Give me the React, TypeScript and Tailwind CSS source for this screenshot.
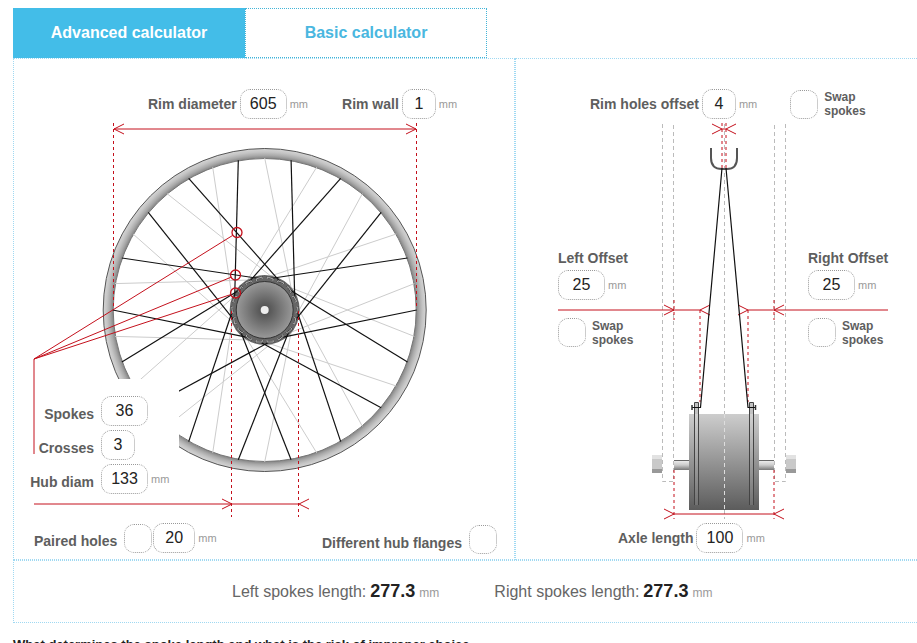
import type { ReactNode } from 'react';

interface FieldProps {
  id: string;
  label: string;
  value: string;
  size?: 'sm' | 'md' | 'lg';
}

const fieldWidths: Record<string, string> = {
  sm: 'w-[34px]',
  md: 'w-[42px]',
  lg: 'w-[47px]',
};

function NumberInput({ id, value, size = 'lg', name }: { id: string; value: string; size?: string; name?: string }) {
  return (
    <input
      id={id}
      type="text"
      inputMode="numeric"
      aria-label={name}
      defaultValue={value}
      className={`${fieldWidths[size]} h-[30px] shrink-0 rounded-[10px] border border-dotted border-[#999] bg-white text-center text-base text-[#222] outline-none`}
    />
  );
}

function CheckBox({ id }: { id: string }) {
  return (
    <input
      id={id}
      type="checkbox"
      className="h-[29px] w-7 shrink-0 appearance-none rounded-[10px] border border-dotted border-[#999] bg-white checked:bg-[#43bde8]"
    />
  );
}

function Unit() {
  return <span className="text-[11px] leading-4 text-[#999]">mm</span>;
}

/* Label, box and unit on one line */
function InlineField({ id, label, value, size }: FieldProps) {
  return (
    <div className="flex items-center gap-[3px]">
      <label htmlFor={id} className="text-sm font-bold whitespace-nowrap">
        {label}
      </label>
      <NumberInput id={id} value={value} size={size} />
      <Unit />
    </div>
  );
}

function SwapSpokes({ id }: { id: string }) {
  return (
    <div className="flex items-center gap-1.5">
      <CheckBox id={id} />
      <label htmlFor={id} className="w-12 text-xs leading-[14px] font-bold">
        Swap spokes
      </label>
    </div>
  );
}

/* Label column on the left, control on the right */
function SideField({ id, label, value, size, unit }: FieldProps & { unit?: boolean }) {
  return (
    <div className="flex items-center gap-[7px]">
      <label htmlFor={id} className="w-20 pt-1.5 text-right text-sm font-bold">
        {label}
      </label>
      <div className="flex items-center gap-[3px]">
        <NumberInput id={id} value={value} size={size} />
        {unit && <Unit />}
      </div>
    </div>
  );
}

function OffsetField({ id, label, value }: FieldProps) {
  return (
    <div>
      <label htmlFor={id} className="block text-sm leading-5 font-bold">
        {label}
      </label>
      <div className="mt-0.5 flex items-center gap-[3px]">
        <NumberInput id={id} value={value} />
        <Unit />
      </div>
      <div className="mt-[18px]">
        <SwapSpokes id={`${id}-swap`} />
      </div>
    </div>
  );
}

const polar = (r: number, deg: number) => {
  const a = (deg * Math.PI) / 180;
  return { x: r * Math.cos(a), y: -r * Math.sin(a) };
};

/* 18 spokes of one side, laced three-cross */
function Spokes({ start, color, width }: { start: number; color: string; width: number }) {
  return (
    <g stroke={color} strokeWidth={width}>
      {Array.from({ length: 18 }, (_, i) => {
        const deg = start + i * 20;
        const rim = polar(152, deg);
        const hub = polar(32, deg + (i % 2 ? 60 : -60));
        return <line key={i} x1={rim.x} y1={rim.y} x2={hub.x} y2={hub.y} />;
      })}
    </g>
  );
}

function SpokeHeads() {
  return (
    <g fill="none">
      {Array.from({ length: 18 }, (_, i) => {
        const d = i % 2 ? 'M30 -3 L32 -3 L33 3 L31 3' : 'M30 3 L32 3 L33 -3 L31 -3';
        return (
          <g key={i} transform={`rotate(${-i * 20})`}>
            <path d={d} stroke="#444" strokeWidth="1.8" />
            <path d={d} stroke="#bbb" strokeWidth="0.8" />
          </g>
        );
      })}
    </g>
  );
}

function WheelDrawing() {
  return (
    <svg viewBox="14 59 500 500" className="col-start-1 row-start-1 h-[500px] w-[500px]" aria-hidden="true">
      <defs>
        <radialGradient id="rim" gradientUnits="userSpaceOnUse" cx="0" cy="0" r="162">
          <stop offset="0.935" stopColor="#858585" />
          <stop offset="0.955" stopColor="#aaa" />
          <stop offset="0.975" stopColor="#c4c4c4" />
          <stop offset="1" stopColor="#d8d8d8" />
        </radialGradient>
        <radialGradient id="disc">
          <stop offset="0" stopColor="#4a4a4a" />
          <stop offset="1" stopColor="#999" />
        </radialGradient>
      </defs>

      <g transform="translate(264.7 310)">
        <circle r="156.5" fill="none" stroke="url(#rim)" strokeWidth="10" />
        <circle r="161.5" fill="none" stroke="#555" />
        <circle r="151.5" fill="none" stroke="#777" />
        <Spokes start={10} color="#ccc" width={1} />
        <circle r="35" fill="#666" />
        <Spokes start={0} color="#111" width={1.2} />
        <SpokeHeads />
        <circle r="28.5" fill="url(#disc)" stroke="#333" />
        <circle r="4" fill="#eee" />
      </g>

      {/* Clear area behind the fields */}
      <rect x="90" y="379" width="89" height="118" fill="#fff" />

      <g fill="none" stroke="#c4101c">
        <path d="M113.5 123V309M416.5 123V309M231.5 311V517M298.5 311V517" strokeDasharray="3 3" />
        <path d="M114 129H416M34 454V359M34 504H299" />
        <path d="M124 124L114 129L124 134M406 124L416 129L406 134" />
        <path d="M222 499L232 504L222 509M309 499L299 504L309 509" />
        <path d="M34 359L232.5 235.5M34 359L231.5 277M34 359L231 294.5" />
        <circle cx="237" cy="232.5" r="5" strokeWidth="1.3" />
        <circle cx="235.5" cy="275" r="5" strokeWidth="1.3" />
        <circle cx="235.5" cy="293" r="5" strokeWidth="1.3" />
      </g>
    </svg>
  );
}

function HubDrawing() {
  return (
    <svg viewBox="516 59 400 500" className="col-start-1 row-start-1 h-[500px] w-[400px]" aria-hidden="true">
      <defs>
        <linearGradient id="body" x1="0" y1="0" x2="0" y2="1">
          <stop offset="0" stopColor="#cdcdcd" />
          <stop offset="1" stopColor="#5c5c5c" />
        </linearGradient>
        <linearGradient id="axle" x1="0" y1="0" x2="0" y2="1">
          <stop offset="0" stopColor="#f2f2f2" />
          <stop offset="0.5" stopColor="#ccc" />
          <stop offset="1" stopColor="#777" />
        </linearGradient>
      </defs>

      {/* Fork */}
      <path
        d="M662.5 124V481.5H673.5V124M785.5 124V481.5H774.5V124"
        fill="none"
        stroke="#bbb"
        strokeDasharray="4 3"
      />

      {/* Axle and nuts */}
      <path d="M674 460H689V470H674ZM759 460H774V470H759Z" fill="url(#axle)" />
      <path d="M674 460.5H689M759 460.5H774" stroke="#666" />
      <path d="M652 455H662V459H652ZM786 455H796V459H786Z" fill="#e2e2e2" />
      <path d="M652 459H662V469H652ZM786 459H796V469H786Z" fill="#c9c9c9" />
      <path d="M652 469H662V473H652ZM786 469H796V473H786Z" fill="#999" />

      {/* Body with flanges */}
      <rect x="689" y="414" width="70" height="96" fill="url(#body)" />
      <path d="M695 403H698V414H695ZM750 403H753V414H750Z" fill="#bbb" />
      <path
        d="M694.5 505V402.5H698.5V505M749.5 505V402.5H753.5V505"
        fill="#fff"
        fillOpacity="0.1"
        stroke="#444"
      />

      <path d="M724.5 124V414M724.5 510V519" stroke="#bbb" strokeDasharray="4 3" />
      <path d="M724.5 414V510" stroke="#ddd" strokeDasharray="4 3" />

      <g fill="none" stroke="#c4101c">
        <g strokeDasharray="3 3">
          <path d="M722 123V168M726 123V168" />
          <path d="M674 300V320M774 300V320M700 310V402M748 310V402" />
          <path d="M674 470V519M774 470V519" />
        </g>
        <path d="M712 124L722 129L712 134M736 124L726 129L736 134M722 129H726" />
        <path d="M558 310H700M748 310H888" />
        <path d="M664 305L674 310L664 315M710 305L700 310L710 315" />
        <path d="M738 305L748 310L738 315M784 305L774 310L784 315" />
        <path d="M674 514H774M664 509L674 514L664 519M784 509L774 514L784 519" />
      </g>

      {/* Rim section and spokes */}
      <path d="M711 148V158Q711 169 722 169H727Q737 169 737 158V148" fill="none" stroke="#555" strokeWidth="2" />
      <path d="M722 168L700.5 407.5H692M726 168L748 407.5H756" fill="none" stroke="#111" strokeWidth="1.2" />
      <path d="M692 405V410M755.5 405V410" stroke="#333" strokeWidth="1.5" />
    </svg>
  );
}

function Tab({ active, children }: { active?: boolean; children: ReactNode }) {
  const look = active
    ? 'w-[232px] border-[#43bde8] bg-[#43bde8] text-white'
    : 'w-[242px] border-dotted border-[#43b5d8] bg-white text-[#4ab7e0]';
  return (
    <button type="button" role="tab" aria-selected={!!active} className={`h-[50px] border text-base font-bold ${look}`}>
      {children}
    </button>
  );
}

function Result({ label, value }: { label: string; value: string }) {
  return (
    <p className="flex items-baseline gap-1 text-base text-[#666]">
      {label}
      <strong className="text-lg text-[#222]">{value}</strong>
      <span className="text-xs text-[#999]">mm</span>
    </p>
  );
}

export default function App() {
  return (
    <main className="overflow-hidden bg-white pt-2 pl-[13px] font-['Liberation_Sans',Arial,sans-serif] text-[#5e5e5e]">
      <div role="tablist" className="flex">
        <Tab active>Advanced calculator</Tab>
        <Tab>Basic calculator</Tab>
      </div>

      <form>
        <div className="flex">
          {/* Wheel */}
          <section className="grid shrink-0 border border-dotted border-[#a0d9f2]">
            <WheelDrawing />
            <div className="col-start-1 row-start-1 flex flex-col pt-[30px]">
              <div className="flex gap-[34px] pl-[134px]">
                <InlineField id="rim-diameter" label="Rim diameter" value="605" />
                <InlineField id="rim-wall" label="Rim wall" value="1" size="sm" />
              </div>

              <div className="mt-[277px] flex flex-col gap-1">
                <SideField id="spokes" label="Spokes" value="36" />
                <SideField id="crosses" label="Crosses" value="3" size="sm" />
                <SideField id="hub-diam" label="Hub diam" value="133" unit />
              </div>

              <div className="mt-[29px] flex items-start justify-between pr-[17px] pl-5">
                <div className="flex items-center gap-[7px]">
                  <label htmlFor="paired-holes" className="pt-1.5 text-sm font-bold">
                    Paired holes
                  </label>
                  <div className="flex items-center gap-px">
                    <CheckBox id="paired-holes" />
                    <div className="flex items-center gap-[3px]">
                      <NumberInput id="paired-distance" name="Paired holes distance" value="20" size="md" />
                      <Unit />
                    </div>
                  </div>
                </div>
                <div className="flex items-center gap-[7px] pt-0.5">
                  <label htmlFor="hub-flanges" className="pt-1.5 text-sm font-bold">
                    Different hub flanges
                  </label>
                  <CheckBox id="hub-flanges" />
                </div>
              </div>
            </div>
          </section>

          {/* Hub */}
          <section className="grid flex-1 border border-r-0 border-dotted border-[#a0d9f2]">
            <HubDrawing />
            <div className="col-start-1 row-start-1 flex flex-col pt-[30px]">
              <div className="flex gap-[33px] pl-[74px]">
                <InlineField id="holes-offset" label="Rim holes offset" value="4" size="sm" />
                <SwapSpokes id="holes-swap" />
              </div>

              <div className="mt-[129px] grid grid-cols-[250px_1fr] pl-[42px]">
                <OffsetField id="left-offset" label="Left Offset" value="25" />
                <OffsetField id="right-offset" label="Right Offset" value="25" />
              </div>

              <div className="mt-[176px] pl-[102px]">
                <InlineField id="axle-length" label="Axle length" value="100" />
              </div>
            </div>
          </section>
        </div>

        <div className="flex h-[63px] items-center gap-[55px] border border-r-0 border-dotted border-[#a0d9f2] pb-0.5 pl-[218px]">
          <Result label="Left spokes length:" value="277.3" />
          <Result label="Right spokes length:" value="277.3" />
        </div>
      </form>

      <h2 className="mt-3 text-[13px] leading-5 font-bold text-[#222]">
        What determines the spoke length and what is the risk of improper choice
      </h2>
    </main>
  );
}
